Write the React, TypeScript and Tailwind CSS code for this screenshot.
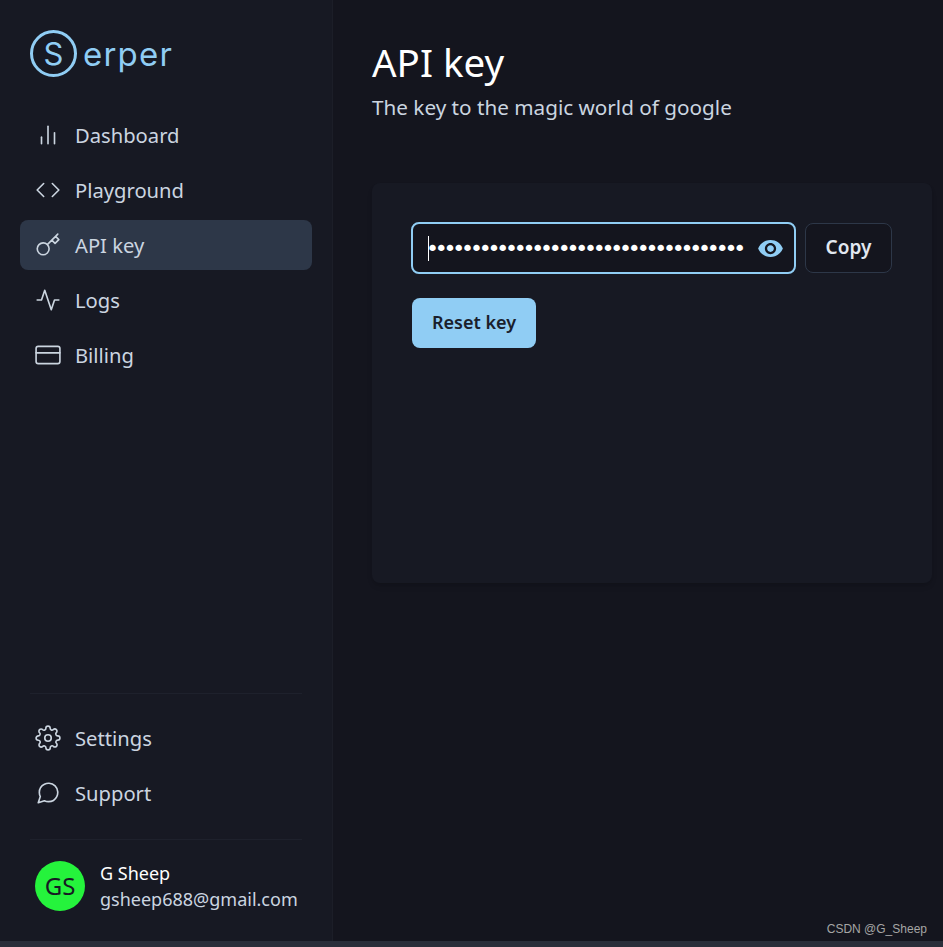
import { FiActivity, FiBarChart2, FiCode, FiCreditCard, FiKey, FiMessageCircle, FiSettings } from "react-icons/fi";
import { MdVisibility } from "react-icons/md";
import type { IconType } from "react-icons";

const mainNav: { label: string; icon: IconType; active?: boolean }[] = [
  { label: "Dashboard", icon: FiBarChart2 },
  { label: "Playground", icon: FiCode },
  { label: "API key", icon: FiKey, active: true },
  { label: "Logs", icon: FiActivity },
  { label: "Billing", icon: FiCreditCard },
];

const bottomNav: { label: string; icon: IconType }[] = [
  { label: "Settings", icon: FiSettings },
  { label: "Support", icon: FiMessageCircle },
];

function NavItem({ label, icon: Icon, active }: { label: string; icon: IconType; active?: boolean }) {
  return (
    <div className={`flex h-[50px] items-center gap-[14px] rounded-lg px-[15px] text-[20.2px] text-[#cbd5e0] ${active ? "bg-[#2d3748]" : ""}`}>
      <Icon className="h-[26px] w-[26px] shrink-0 stroke-[1.5]" />
      <span>{label}</span>
    </div>
  );
}

export default function App() {
  return (
    <div className="flex h-[947px] flex-col bg-[#2a2e3a] font-['Noto_Sans',sans-serif]">
      <div className="flex h-[941px]">
        <aside className="flex w-[333px] shrink-0 flex-col border-r border-[#1c1e28] bg-[#171923] pl-5 pr-5">
          <div className="flex h-[110px] items-start pl-[10px] pt-[30px]">
            <div className="flex h-[47px] w-[47px] items-center justify-center rounded-full border-[3px] border-[#90cdf4] font-['Inter',sans-serif] text-[31px] leading-none text-[#90cdf4]">
              S
            </div>
            <span className="ml-[6px] mt-[3px] font-['Inter',sans-serif] text-[33px] leading-[42px] tracking-[1.2px] text-[#90cdf4]">erper</span>
          </div>
          <nav className="flex flex-col gap-[5px]">
            {mainNav.map((item) => (
              <NavItem key={item.label} {...item} />
            ))}
          </nav>
          <div className="mt-auto mx-[10px] border-t border-[#1e212c]" />
          <nav className="mt-[19px] flex flex-col gap-[5px]">
            {bottomNav.map((item) => (
              <NavItem key={item.label} {...item} />
            ))}
          </nav>
          <div className="mx-[10px] mt-[21px] border-t border-[#1e212c]" />
          <div className="flex h-[101px] items-start gap-[15px] pl-[15px] pt-[21px]">
            <div className="flex h-[50px] w-[50px] items-center justify-center rounded-full bg-[#25f33c] text-[24px] text-[#171923]">GS</div>
            <div className="-mt-px flex flex-col">
              <span className="text-[18px] leading-[26px] text-white">G Sheep</span>
              <span className="text-[18px] leading-[26px] text-[#cbd5e0]">gsheep688@gmail.com</span>
            </div>
          </div>
        </aside>
        <main className="relative flex-1 bg-[#14151e] pl-[39px] pr-[11px]">
          <h1 className="mt-[35px] text-[38.5px] leading-[54px] text-white">API key</h1>
          <p className="mt-[4px] text-[20.7px] leading-[28px] text-[#cbd5e0]">The key to the magic world of google</p>
          <section className="mt-[62px] h-[400px] rounded-lg bg-[#171923] pl-[39px] pt-[39px] shadow-md">
            <div className="flex items-center gap-[9px]">
              <div className="flex h-[52px] w-[385px] items-center rounded-lg border-2 border-[#90cdf4] bg-[#14151e] pl-[15px] pr-[10px]">
                <span className="h-[25px] w-px shrink-0 bg-white" />
                <span className="-ml-[3px] mt-[2px] min-w-0 flex-1 whitespace-nowrap font-['DejaVu_Sans',sans-serif] text-[22px] leading-none tracking-[-4.2px] text-white">••••••••••••••••••••••••••••••••••••</span>
                <MdVisibility className="ml-[5px] h-[27px] w-[27px] shrink-0 text-[#90cdf4]" />
              </div>
              <button className="h-[50px] w-[87px] rounded-lg border border-[#2d3748] bg-[#14151e] pb-[2px] text-[19px] font-semibold text-[#e2e8f0]">Copy</button>
            </div>
            <button className="ml-px mt-6 h-[50px] w-[124px] rounded-lg bg-[#90cdf4] pb-[2px] text-[18px] font-semibold text-[#1a202c]">Reset key</button>
          </section>
          <span className="absolute bottom-[3px] right-[16px] font-['Liberation_Sans',sans-serif] text-[12px] text-[#a5a5a5]">CSDN @G_Sheep</span>
        </main>
      </div>
    </div>
  );
}
